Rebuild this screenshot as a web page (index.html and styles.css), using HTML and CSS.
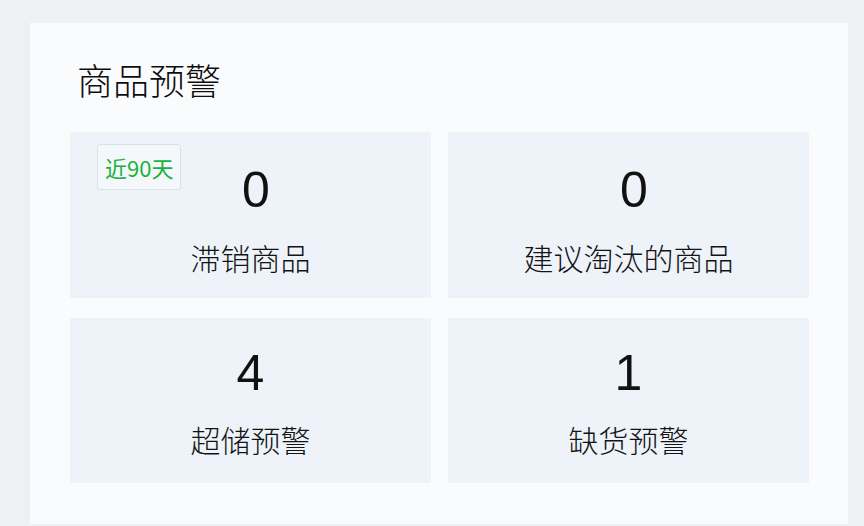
FILE: index.html
```html
<!DOCTYPE html>
<html lang="zh-CN">
<head>
<meta charset="utf-8">
<title>商品预警</title>
<link rel="stylesheet" href="styles.css">
</head>
<body>
  <section class="card">
    <h1 class="card-title">商品预警</h1>
    <div class="grid">
      <div class="tile row1">
        <span class="badge">近90天</span>
        <div class="num">0</div>
        <div class="label">滞销商品</div>
      </div>
      <div class="tile row1">
        <div class="num">0</div>
        <div class="label">建议淘汰的商品</div>
      </div>
      <div class="tile row2">
        <div class="num">4</div>
        <div class="label">超储预警</div>
      </div>
      <div class="tile row2">
        <div class="num">1</div>
        <div class="label">缺货预警</div>
      </div>
    </div>
  </section>
</body>
</html>
```

FILE: styles.css
```css
html, body {
  margin: 0;
  padding: 0;
}
body {
  width: 864px;
  height: 526px;
  overflow: hidden;
  background: #eef0f4;
  padding: 23px 16px 0 30px;
  box-sizing: border-box;
  font-family: "Noto Sans CJK SC", "Noto Sans", sans-serif;
}
.card {
  width: 818px;
  height: 501px;
  box-sizing: border-box;
  background: #fafbfd;
  padding: 39px 39px 0 40px;
}
.card-title {
  margin: 0 0 35px 7px;
  font-size: 36px;
  line-height: 35px;
  font-weight: 300;
  color: #0d0d0d;
}
.grid {
  display: grid;
  grid-template-columns: 361px 361px;
  grid-template-rows: 166px 165px;
  column-gap: 17px;
  row-gap: 20px;
}
.tile {
  position: relative;
  background: #eef3fa;
  display: flex;
  flex-direction: column;
  align-items: center;
  padding-top: 33px;
  box-sizing: border-box;
}
.tile.row2 {
  padding-top: 30px;
}
.num {
  font-family: "Liberation Sans", "Noto Sans CJK SC", sans-serif;
  font-size: 50px;
  line-height: 50px;
  color: #111;
}
.tile.row1 .num {
  padding-left: 11px;
}
.label {
  margin-top: 27px;
  font-size: 30px;
  line-height: 30px;
  font-weight: 300;
  color: #141414;
}
.tile.row2 .label {
  margin-top: 26px;
}
.badge {
  position: absolute;
  left: 27px;
  top: 12px;
  height: 46px;
  box-sizing: border-box;
  padding: 0 7px;
  display: flex;
  align-items: center;
  font-size: 22px;
  line-height: 22px;
  font-weight: 400;
  color: #18b23c;
  background: #f4f8fa;
  border: 1px solid #dbe2e7;
  border-radius: 3px;
}
```
